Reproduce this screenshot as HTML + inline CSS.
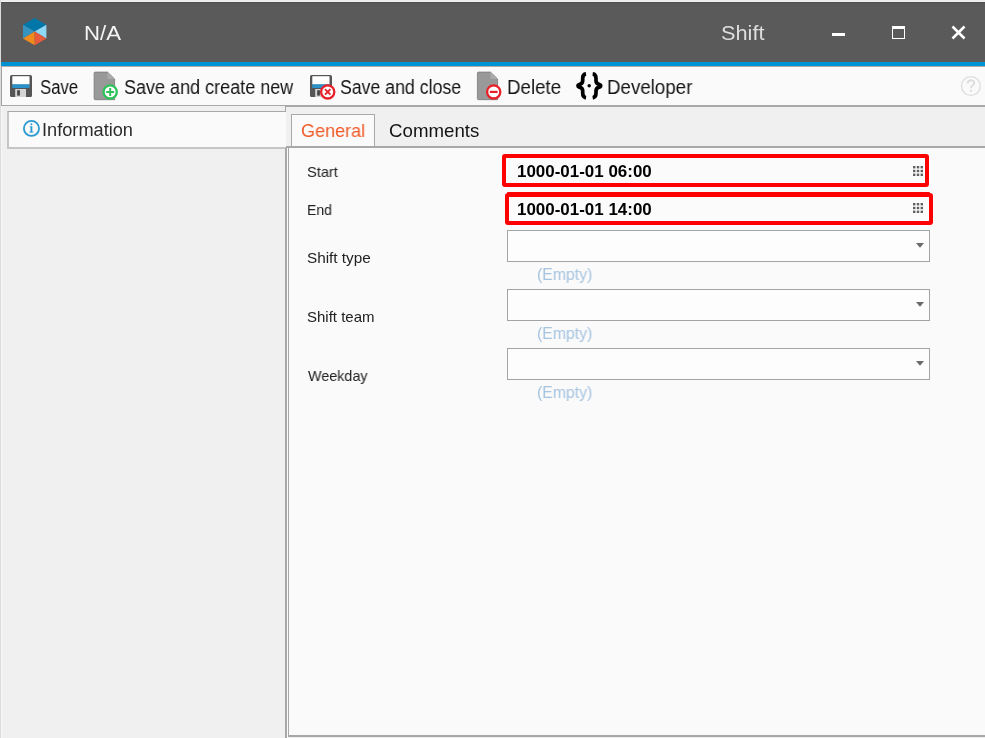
<!DOCTYPE html>
<html><head><meta charset="utf-8">
<style>
*{margin:0;padding:0;box-sizing:border-box}
html,body{width:985px;height:738px;overflow:hidden;background:#ececec}
body{position:relative;font-family:"Liberation Sans",sans-serif}
.a{position:absolute}
.t{position:absolute;will-change:transform;white-space:nowrap;line-height:1;transform-origin:0 0;font-family:"Liberation Sans",sans-serif}
</style></head><body>

<!-- outer light frame -->
<div class="a" style="left:0;top:0;width:985px;height:1px;background:#ececec"></div>
<div class="a" style="left:0;top:1px;width:985px;height:1px;background:#f2f2f2"></div>
<div class="a" style="left:0;top:0;width:1px;height:738px;background:#dcdcdc"></div>

<!-- title bar -->
<div class="a" style="left:1px;top:2px;width:984px;height:60px;background:#5a5a5a"></div>
<div class="a" style="left:1px;top:2px;width:984px;height:1px;background:#4e4e4e"></div>
<div class="a" style="left:1px;top:61px;width:984px;height:1px;background:#625a56"></div>
<div class="a" style="left:1px;top:62px;width:984px;height:4px;background:#0092d2"></div>
<div class="a" style="left:1px;top:66px;width:984px;height:1px;background:#b4aca6"></div>

<!-- logo -->
<svg class="a" style="left:20px;top:15px" width="30" height="34" viewBox="20 15 30 34">
  <polygon points="34.7,18 46.4,24.8 34.7,31.6 23,24.8" fill="#0077a8"/>
  <polygon points="23,24.8 34.7,31.6 23,38.4" fill="#3594c2"/>
  <polygon points="46.4,24.8 46.4,38.4 34.7,31.6" fill="#8ed8f8"/>
  <polygon points="23,38.4 34.7,31.6 34.7,45.3" fill="#f08b1e"/>
  <polygon points="34.7,31.6 46.4,38.4 34.7,45.3" fill="#e85a3c"/>
</svg>

<div class="t" style="left:84px;top:23px;font-size:20px;color:#f4f4f4;transform:scaleX(1.11)">N/A</div>
<div class="t" style="left:721px;top:24px;font-size:19.5px;color:#dedede;transform:scaleX(1.116)">Shift</div>

<!-- window buttons -->
<div class="a" style="left:832px;top:33px;width:13px;height:3px;background:#fff"></div>
<div class="a" style="left:892px;top:26px;width:13px;height:13px;border:1.5px solid #fff;border-top-width:3px"></div>
<svg class="a" style="left:950px;top:24px" width="17" height="17" viewBox="0 0 17 17">
  <path d="M2.5 2.5 L14.5 14.5 M14.5 2.5 L2.5 14.5" stroke="#fff" stroke-width="2.6"/>
</svg>

<!-- toolbar -->
<div class="a" style="left:1px;top:67px;width:984px;height:38px;background:#fafafa"></div>
<div class="a" style="left:1px;top:67px;width:1px;height:39px;background:#a0a0a0"></div>
<div class="a" style="left:1px;top:105px;width:984px;height:1px;background:#a8a8a8"></div>
<div class="a" style="left:286px;top:106px;width:699px;height:1px;background:#a8a8a8"></div>

<!-- save icon -->
<svg class="a" style="left:10px;top:75px" width="22" height="22" viewBox="0 0 22 22">
  <rect x="0" y="0" width="22" height="22" rx="1.5" fill="#555"/>
  <rect x="2.3" y="1.2" width="17.2" height="8.4" fill="#fff"/>
  <rect x="2.3" y="9.3" width="17.2" height="3.7" fill="#2a92c8"/>
  <rect x="5.2" y="14" width="10.8" height="8" fill="#d4d4d4"/>
  <rect x="7.2" y="15.2" width="2.7" height="5.4" fill="#444"/>
</svg>
<div class="t" style="left:40px;top:78px;font-size:19.5px;color:#141414;transform:scaleX(0.86)">Save</div>

<!-- save and create new icon -->
<svg class="a" style="left:92px;top:70px" width="30" height="32" viewBox="92 70 30 32">
  <path d="M95.2 72.1 H107.5 L114.6 79 V99.7 H95.2 Q94.1 99.7 94.1 98.6 V73.2 Q94.1 72.1 95.2 72.1 Z" fill="#999" stroke="#7a7a7a" stroke-width="0.8"/>
  <path d="M107.5 72.1 L114.6 79 H107.5 Z" fill="#aaa"/>
  <circle cx="110.2" cy="91.9" r="6.6" fill="#fff" stroke="#2ec35a" stroke-width="2.3"/>
  <path d="M106.2 91.9 H114.2 M110.2 87.9 V95.9" stroke="#2ec35a" stroke-width="2"/>
</svg>
<div class="t" style="left:124px;top:78px;font-size:19.5px;color:#141414;transform:scaleX(0.924)">Save and create new</div>

<!-- save and close icon -->
<svg class="a" style="left:310px;top:75px" width="30" height="28" viewBox="0 0 30 28">
  <rect x="0" y="0" width="22" height="22" rx="1.5" fill="#555"/>
  <rect x="2.3" y="1.2" width="17.2" height="8.4" fill="#fff"/>
  <rect x="2.3" y="9.3" width="17.2" height="3.7" fill="#2a92c8"/>
  <rect x="5.2" y="14" width="10.8" height="8" fill="#d4d4d4"/>
  <rect x="7.2" y="15.2" width="2.7" height="5.4" fill="#444"/>
  <circle cx="17.7" cy="16.9" r="6.6" fill="#fff" stroke="#e8202a" stroke-width="2.3"/>
  <path d="M15 14.2 L20.4 19.6 M20.4 14.2 L15 19.6" stroke="#e8202a" stroke-width="1.9"/>
</svg>
<div class="t" style="left:340px;top:78px;font-size:19.5px;color:#141414;transform:scaleX(0.908)">Save and close</div>

<!-- delete icon -->
<svg class="a" style="left:474px;top:70px" width="30" height="32" viewBox="474 70 30 32">
  <path d="M478.5 72.1 H490.5 L497.6 79 V99.7 H478.5 Q477.4 99.7 477.4 98.6 V73.2 Q477.4 72.1 478.5 72.1 Z" fill="#999" stroke="#7a7a7a" stroke-width="0.8"/>
  <path d="M490.5 72.1 L497.6 79 H490.5 Z" fill="#aaa"/>
  <circle cx="493.7" cy="91.9" r="6.6" fill="#fff" stroke="#e8202a" stroke-width="2.3"/>
  <path d="M489.8 91.9 H497.6" stroke="#e8202a" stroke-width="2.2"/>
</svg>
<div class="t" style="left:507px;top:78px;font-size:19.5px;color:#141414;transform:scaleX(0.96)">Delete</div>

<!-- developer icon -->
<svg class="a" style="left:574px;top:70px" width="32" height="32" viewBox="574 70 32 32">
  <path d="M586 73.9 C583.5 74.2 582.7 75.8 582.7 78.5 V80.8 C582.7 83.6 580.5 84.3 578.7 84.7 C577.7 85 577.7 86.6 578.7 86.9 C580.5 87.3 582.7 88 582.7 90.8 V93.1 C582.7 95.8 583.5 97.4 586 97.8" fill="none" stroke="#000" stroke-width="3.7" stroke-linejoin="round"/>
  <path d="M 592.7 73.9 C 595.2 74.2 596 75.8 596 78.5 V 80.8 C 596 83.6 598.2 84.3 600 84.7 C 601 85 601 86.6 600 86.9 C 598.2 87.3 596 88 596 90.8 V 93.1 C 596 95.8 595.2 97.4 592.7 97.8" fill="none" stroke="#000" stroke-width="3.7" stroke-linejoin="round"/>
  <circle cx="589.2" cy="85.8" r="1.75" fill="#000"/>
</svg>
<div class="t" style="left:607px;top:78px;font-size:19.5px;color:#141414;transform:scaleX(0.96)">Developer</div>

<!-- help icon -->
<svg class="a" style="left:958px;top:73px" width="26" height="26" viewBox="958 73 26 26">
  <circle cx="970.9" cy="86" r="9.4" fill="none" stroke="#dedede" stroke-width="1.4"/>
  <path d="M967.6 83.4 Q967.8 80.2 971 80.2 Q974.2 80.2 974.2 82.9 Q974.2 84.6 972.4 85.5 Q971.1 86.2 971.1 88.2" fill="none" stroke="#dedede" stroke-width="1.9"/>
  <circle cx="971.1" cy="90.9" r="1.1" fill="#dedede"/>
</svg>

<!-- left panel -->
<div class="a" style="left:1px;top:106px;width:284px;height:632px;background:#f0f0f0"></div>
<div class="a" style="left:1px;top:107px;width:1px;height:631px;background:#f6f6f6"></div>
<div class="a" style="left:7px;top:111px;width:279px;height:38px;background:#fafafa;border-top:1px solid #a8a8a8;border-left:2px solid #c6c6c6;border-bottom:2px solid #c6c6c6"></div>
<div class="a" style="left:285px;top:106px;width:1px;height:6px;background:#a8a8a8"></div>

<svg class="a" style="left:21px;top:118px" width="21" height="21" viewBox="21 118 21 21">
  <circle cx="31.45" cy="128.4" r="7.55" fill="none" stroke="#2a9ad0" stroke-width="1.8"/>
  <rect x="30.5" y="126.6" width="1.8" height="5.6" fill="#2a9ad0"/>
  <rect x="29.3" y="131.6" width="4.2" height="0.9" fill="#2a9ad0"/>
  <rect x="29.6" y="126.4" width="2.6" height="0.8" fill="#2a9ad0"/>
  <circle cx="31.4" cy="124.3" r="1" fill="#2a9ad0"/>
</svg>
<div class="t" style="left:42px;top:121px;font-size:18px;color:#2b2b2b;transform:scaleX(1.01)">Information</div>

<!-- splitter -->
<div class="a" style="left:285px;top:148px;width:2px;height:590px;background:#a8a8a8"></div>
<div class="a" style="left:287px;top:148px;width:1px;height:590px;background:#fcfcfc"></div>

<!-- right tab strip -->
<div class="a" style="left:286px;top:107px;width:699px;height:39px;background:#f0f0f0"></div>
<div class="a" style="left:291px;top:114px;width:84px;height:33px;background:#fafafa;border:1px solid #a8a8a8;border-bottom:none"></div>
<div class="t" style="left:301px;top:122px;font-size:18.5px;color:#f05a28;transform:scaleX(0.973)">General</div>
<div class="t" style="left:389px;top:122px;font-size:18.5px;color:#141414;transform:scaleX(1.01)">Comments</div>

<!-- content -->
<div class="a" style="left:288px;top:146px;width:697px;height:591px;background:#fafafa;border-top:2px solid #a8a8a8;border-left:1px solid #a8a8a8;border-bottom:2px solid #a8a8a8"></div>

<div class="a" style="left:286px;top:146px;width:2px;height:2px;background:#a8a8a8"></div>
<!-- form labels -->
<div class="t" style="left:307px;top:164px;font-size:15px;color:#222;transform:scaleX(0.974)">Start</div>
<div class="t" style="left:307px;top:202px;font-size:15px;color:#222;transform:scaleX(0.936)">End</div>
<div class="t" style="left:307px;top:250px;font-size:15px;color:#222;transform:scaleX(1.02)">Shift type</div>
<div class="t" style="left:307px;top:309px;font-size:15px;color:#222;transform:scaleX(1.0)">Shift team</div>
<div class="t" style="left:307.5px;top:368px;font-size:15px;color:#222;transform:scaleX(0.956)">Weekday</div>

<!-- date inputs -->
<div class="a" style="left:502px;top:154px;width:426.5px;height:33px;background:#fbfbfb;border:4px solid #ff0000;border-radius:3px"></div>
<div class="t" style="left:517px;top:163px;font-size:16.5px;font-weight:700;color:#000;transform:scaleX(1.027)">1000-01-01 06:00</div>
<svg class="a" style="left:912px;top:165px" width="12" height="12" viewBox="0 0 12 12" fill="#606060">
  <rect x="1" y="1" width="2.4" height="2.4"/><rect x="4.8" y="1" width="2.4" height="2.4"/><rect x="8.6" y="1" width="2.4" height="2.4"/>
  <rect x="1" y="4.8" width="2.4" height="2.4"/><rect x="4.8" y="4.8" width="2.4" height="2.4"/><rect x="8.6" y="4.8" width="2.4" height="2.4"/>
  <rect x="1" y="8.6" width="2.4" height="2.4"/><rect x="4.8" y="8.6" width="2.4" height="2.4"/><rect x="8.6" y="8.6" width="2.4" height="2.4"/>
</svg>

<div class="a" style="left:507px;top:192px;width:423px;height:2px;background:#ff0000;border-radius:1px"></div>
<div class="a" style="left:505px;top:193px;width:428px;height:32px;background:#fbfbfb;border:4px solid #ff0000;border-radius:3px"></div>
<div class="t" style="left:517px;top:201px;font-size:16.5px;font-weight:700;color:#000;transform:scaleX(1.027)">1000-01-01 14:00</div>
<svg class="a" style="left:912px;top:202px" width="12" height="12" viewBox="0 0 12 12" fill="#606060">
  <rect x="1" y="1" width="2.4" height="2.4"/><rect x="4.8" y="1" width="2.4" height="2.4"/><rect x="8.6" y="1" width="2.4" height="2.4"/>
  <rect x="1" y="4.8" width="2.4" height="2.4"/><rect x="4.8" y="4.8" width="2.4" height="2.4"/><rect x="8.6" y="4.8" width="2.4" height="2.4"/>
  <rect x="1" y="8.6" width="2.4" height="2.4"/><rect x="4.8" y="8.6" width="2.4" height="2.4"/><rect x="8.6" y="8.6" width="2.4" height="2.4"/>
</svg>

<!-- combo boxes -->
<div class="a" style="left:507px;top:230px;width:423px;height:32px;background:#fdfdfd;border:1px solid #a4a4a4"></div>
<svg class="a" style="left:915px;top:242px" width="10" height="7" viewBox="0 0 10 7"><polygon points="1,1 9,1 5,5.8" fill="#6a6a6a"/></svg>
<div class="t" style="left:536.5px;top:267px;font-size:16px;color:#a6c4e0;transform:scaleX(0.987)">(Empty)</div>

<div class="a" style="left:507px;top:289px;width:423px;height:32px;background:#fdfdfd;border:1px solid #a4a4a4"></div>
<svg class="a" style="left:915px;top:301px" width="10" height="7" viewBox="0 0 10 7"><polygon points="1,1 9,1 5,5.8" fill="#6a6a6a"/></svg>
<div class="t" style="left:536.5px;top:326px;font-size:16px;color:#a6c4e0;transform:scaleX(0.987)">(Empty)</div>

<div class="a" style="left:507px;top:348px;width:423px;height:32px;background:#fdfdfd;border:1px solid #a4a4a4"></div>
<svg class="a" style="left:915px;top:360px" width="10" height="7" viewBox="0 0 10 7"><polygon points="1,1 9,1 5,5.8" fill="#6a6a6a"/></svg>
<div class="t" style="left:536.5px;top:385px;font-size:16px;color:#a6c4e0;transform:scaleX(0.987)">(Empty)</div>

</body></html>
